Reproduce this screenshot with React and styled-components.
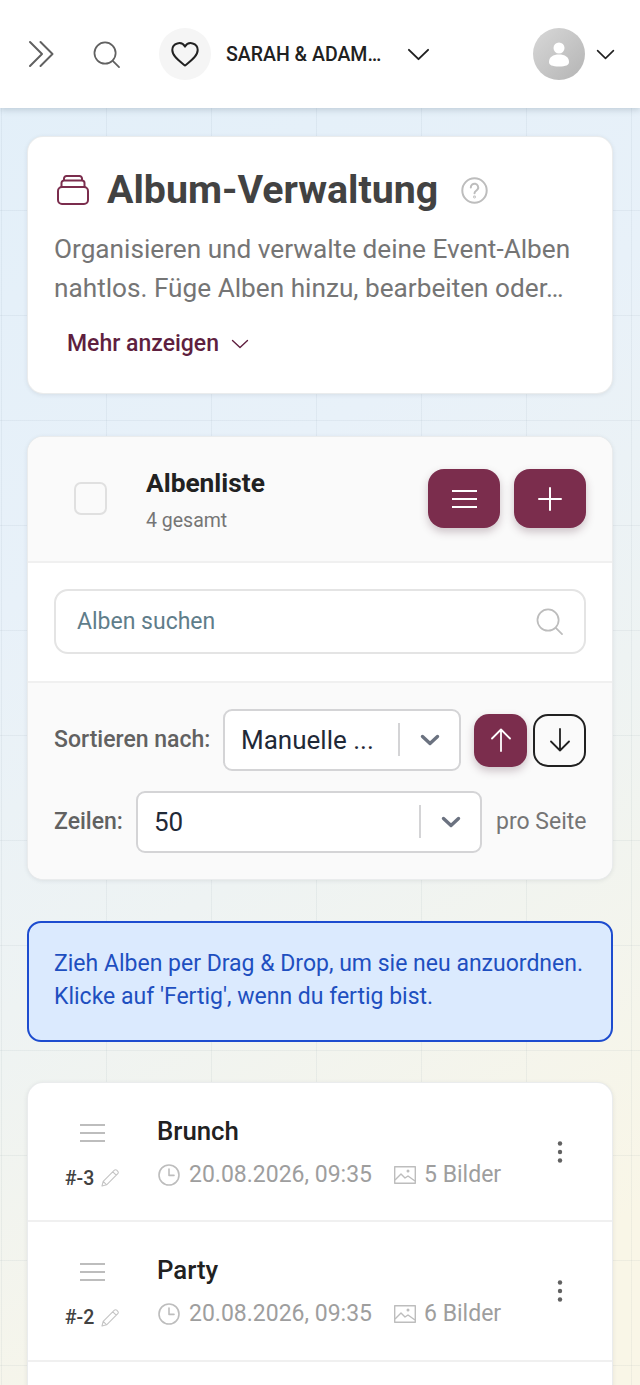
import React from 'react';
import styled, { createGlobalStyle } from 'styled-components';

const GlobalStyle = createGlobalStyle`
  html, body {
    margin: 0;
    padding: 0;
    height: 100%;
    overflow: hidden;
  }
  * {
    box-sizing: border-box;
  }
  body {
    font-family: Roboto, "Liberation Sans", sans-serif;
  }
`;

const Page = styled.div`
  height: 1385px;
  overflow: hidden;
  background-color: #eef3f5;
  background-image:
    linear-gradient(to right, rgba(120, 140, 150, 0.09) 1px, transparent 1px),
    linear-gradient(to bottom, rgba(120, 140, 150, 0.09) 1px, transparent 1px),
    linear-gradient(150deg, #e2eff9 0%, #e8f1f9 35%, #eef3f3 58%, #f9f6e7 90%);
  background-size: 105px 105px, 105px 105px, 100% 100%;
  background-position: 1px 0, 0 0, 0 0;
`;

const Header = styled.header`
  height: 108px;
  background: #fff;
  box-shadow: 0 2px 6px rgba(60, 80, 100, 0.22);
  display: flex;
  align-items: center;
  padding: 0 25px 0 28px;
`;

const IconButton = styled.span`
  display: flex;
  align-items: center;
  margin-left: ${(p) => p.$ml || 0}px;
`;

const HeartCircle = styled.div`
  width: 52px;
  height: 52px;
  margin-left: 39px;
  border-radius: 50%;
  background: #f5f5f5;
  display: flex;
  align-items: center;
  justify-content: center;
`;

const EventName = styled.div`
  width: 157px;
  margin-left: 15px;
  font-size: 19.5px;
  font-weight: 500;
  color: #212121;
  white-space: nowrap;
`;

const Avatar = styled.div`
  width: 52px;
  height: 52px;
  margin-left: auto;
  border-radius: 50%;
  background: linear-gradient(135deg, #d8d8d8, #b4b4b4);
  display: flex;
  align-items: center;
  justify-content: center;
`;

const Content = styled.main`
  padding: 28px 27px 0;
  display: flex;
  flex-direction: column;
  gap: 41.5px;
`;

const Card = styled.section`
  background: #fff;
  border-radius: 16px;
  border: 1px solid rgba(225, 228, 230, 0.7);
  box-shadow: 0 1px 4px rgba(60, 70, 80, 0.1);
  overflow: hidden;
`;

const IntroCard = styled(Card)`
  height: 258px;
  padding: 30px 26px 0;
`;

const AlbumList = styled(Card)`
  margin-top: -2px;
  height: 400px;
`;

const TitleRow = styled.div`
  display: flex;
  align-items: center;
  height: 46px;
`;

const AlbumIcon = styled.svg`
  margin-left: 3px;
  flex: none;
`;

const Title = styled.h1`
  margin: 0 0 0 18px;
  font-size: 39.3px;
  font-weight: 700;
  color: #424242;
  white-space: nowrap;
`;

const Description = styled.p`
  margin: 17px 0 0;
  font-size: 26.2px;
  line-height: 39px;
  color: #757575;
  white-space: nowrap;
`;

const MoreLink = styled.div`
  margin: 22px 0 0 13px;
  display: flex;
  align-items: center;
  gap: 12px;
  font-size: 23px;
  font-weight: 500;
  color: #5f1f3f;
`;

const ListHead = styled.div`
  height: 126px;
  padding: 0 26px 0 46px;
  background: #fafafa;
  border-bottom: 2px solid #f0f0f0;
  display: flex;
  align-items: center;
`;

const Checkbox = styled.div`
  width: 33px;
  height: 33px;
  border: 2px solid #e0e0e0;
  border-radius: 7px;
  background: #fafafa;
  flex: none;
`;

const HeadText = styled.div`
  margin-left: 39px;
  padding-top: 3px;
  display: flex;
  flex-direction: column;
  gap: 11px;
`;

const ListTitle = styled.div`
  font-size: 26.3px;
  font-weight: 700;
  color: #212121;
`;

const ListCount = styled.div`
  font-size: 19.5px;
  color: #757575;
`;

const HeadActions = styled.div`
  margin-left: auto;
  display: flex;
  gap: 14px;
`;

const PrimaryButton = styled.div`
  width: 72px;
  height: 59px;
  border-radius: 16px;
  background: #7b2d4d;
  box-shadow: 0 4px 8px rgba(70, 30, 50, 0.25);
  display: flex;
  align-items: center;
  justify-content: center;
`;

const SearchSection = styled.div`
  padding: 26px 26px 27px;
  background: #fff;
  border-bottom: 2px solid #f0f0f0;
`;

const SearchBox = styled.div`
  height: 65px;
  padding: 0 21px 0 21px;
  border: 2px solid #e4e4e4;
  border-radius: 14px;
  background: #fff;
  display: flex;
  align-items: center;
  justify-content: space-between;
  font-size: 23px;
  color: #5f7d8a;
`;

const SortSection = styled.div`
  height: 196px;
  padding: 26px 26px 0;
  background: #fafafa;
  display: flex;
  flex-direction: column;
  gap: 20px;
`;

const SortRow = styled.div`
  height: 62px;
  display: flex;
  align-items: center;
`;

const FieldLabel = styled.div`
  font-size: 23px;
  font-weight: 500;
  color: #616161;
  white-space: nowrap;
  flex: none;
  width: ${(p) => p.$width}px;
`;

const Select = styled.div`
  width: ${(p) => p.$width}px;
  height: 62px;
  flex: none;
  border: 2px solid #d4d4d6;
  border-radius: 9px;
  background: #fff;
  display: flex;
  align-items: center;
  padding-left: ${(p) => p.$pad}px;
  font-size: 26px;
  color: #1f2937;
`;

const SelectValue = styled.span`
  flex: 1;
  white-space: nowrap;
`;

const SelectDivider = styled.span`
  width: 2px;
  height: 33px;
  background: #d4d4d6;
  flex: none;
`;

const SelectArrow = styled.span`
  width: 59px;
  flex: none;
  display: flex;
  justify-content: center;
`;

const OrderButton = styled.div`
  width: 53px;
  height: 53px;
  flex: none;
  margin-left: ${(p) => p.$ml}px;
  margin-top: 1px;
  border-radius: 15px;
  display: flex;
  align-items: center;
  justify-content: center;
  background: ${(p) => (p.$active ? '#7b2d4d' : 'transparent')};
  border: ${(p) => (p.$active ? 'none' : '2px solid #212121')};
  box-shadow: ${(p) => (p.$active ? '0 4px 8px rgba(70, 30, 50, 0.25)' : 'none')};
`;

const PerPage = styled.div`
  margin-left: 14px;
  font-size: 23px;
  color: #757575;
  white-space: nowrap;
`;

const Notice = styled.div`
  height: 121px;
  padding: 24px 25px 0;
  background: #dbeafe;
  border: 2px solid #1d4ccf;
  border-radius: 14px;
  font-size: 23px;
  line-height: 33px;
  color: #1e4fc0;
  white-space: nowrap;
`;

const AlbumRow = styled.div`
  height: 139.5px;
  padding: 0 0 0 36px;
  border-bottom: 2px solid #f0f0f0;
  display: flex;
`;

const Handle = styled.div`
  width: 56px;
  flex: none;
  padding-top: 41px;
  display: flex;
  flex-direction: column;
  align-items: center;
`;

const OrderLabel = styled.div`
  margin-top: 25px;
  display: flex;
  align-items: center;
  gap: 7px;
  font-size: 19.5px;
  font-weight: 500;
  color: #424242;
`;

const AlbumBody = styled.div`
  margin-left: 37px;
  flex: 1;
  padding-top: 32px;
`;

const AlbumName = styled.div`
  font-size: 25.8px;
  font-weight: 500;
  line-height: 32px;
  color: #212121;
`;

const Meta = styled.div`
  margin-top: 12px;
  padding-left: 1px;
  display: flex;
  align-items: center;
  font-size: 23px;
  line-height: 32px;
  color: #9e9e9e;
`;

const MetaItem = styled.span`
  display: flex;
  align-items: center;
  gap: ${(p) => p.$gap}px;
  margin-left: ${(p) => p.$ml || 0}px;
  white-space: nowrap;
`;

const MoreDots = styled.div`
  width: 106px;
  flex: none;
  padding-top: 58px;
  padding-left: 50px;
`;

const Chevron = ({ size = 24, stroke = '#212121', width = 2, height }) => (
  <svg width={size} height={height || size * 0.6} viewBox="0 0 24 14" fill="none" stroke={stroke} strokeWidth={width} strokeLinecap="round" strokeLinejoin="round" preserveAspectRatio="none">
    <path d="M2 2l10 10L22 2" />
  </svg>
);

const SearchIcon = ({ stroke, size = 27 }) => (
  <svg width={size} height={size} viewBox="0 0 28 28" fill="none" stroke={stroke} strokeWidth="1.8" strokeLinecap="round">
    <circle cx="12.5" cy="12.5" r="11" />
    <path d="M20.5 20.5l6.5 6.5" />
  </svg>
);

const SelectChevron = () => (
  <svg width="20" height="12" viewBox="0 0 20 12" fill="none" stroke="#6b7280" strokeWidth="3.4" strokeLinecap="round" strokeLinejoin="round">
    <path d="M2.5 2.5L10 9.5l7.5-7" />
  </svg>
);

const MenuLines = ({ stroke }) => (
  <svg width="25" height="18" viewBox="0 0 25 18" fill="none" stroke={stroke} strokeWidth="2">
    <path d="M0 1h25M0 9h25M0 17h25" />
  </svg>
);

const Arrow = ({ stroke, up }) => (
  <svg width="20" height="24" viewBox="0 0 20 24" fill="none" stroke={stroke} strokeWidth="1.8" strokeLinecap="round" strokeLinejoin="round" style={{ transform: up ? 'none' : 'rotate(180deg)' }}>
    <path d="M10 23V1.5M1 10.5l9-9 9 9" />
  </svg>
);

const albums = [
  { name: 'Brunch', order: '#-3', images: '5 Bilder' },
  { name: 'Party', order: '#-2', images: '6 Bilder' },
];

const AlbumItem = ({ album }) => (
  <AlbumRow>
    <Handle>
      <MenuLines stroke="#bdbdbd" />
      <OrderLabel>
        {album.order}
        <svg width="18" height="18" viewBox="0 0 18 18" fill="none" stroke="#c4c4c4" strokeWidth="1.1" strokeLinejoin="round">
          <path d="M1 17l1.2-4.6L13.4 1.2a1.6 1.6 0 012.3 0l1.1 1.1a1.6 1.6 0 010 2.3L5.6 15.8 1 17zM2.2 12.4l3.4 3.4M11.8 2.8l3.4 3.4" />
        </svg>
      </OrderLabel>
    </Handle>
    <AlbumBody>
      <AlbumName>{album.name}</AlbumName>
      <Meta>
        <MetaItem $gap={9}>
          <svg width="22" height="22" viewBox="0 0 22 22" fill="none" stroke="#bdbdbd" strokeWidth="1.6" strokeLinecap="round" strokeLinejoin="round">
            <circle cx="11" cy="11" r="10" />
            <path d="M11 5v6.4h5" />
          </svg>
          20.08.2026, 09:35
        </MetaItem>
        <MetaItem $gap={8} $ml={22}>
          <svg width="22" height="18" viewBox="0 0 22 18" fill="none" stroke="#bdbdbd" strokeWidth="1.4" strokeLinejoin="round">
            <rect x="0.7" y="0.7" width="20.6" height="16.6" />
            <path d="M1 14l6-6 4 4 3-2 7 5" />
            <circle cx="14" cy="5" r="0.8" />
          </svg>
          {album.images}
        </MetaItem>
      </Meta>
    </AlbumBody>
    <MoreDots>
      <svg width="8" height="22" viewBox="0 0 8 22" fill="#616161">
        <circle cx="4" cy="2.5" r="2.2" />
        <circle cx="4" cy="11" r="2.2" />
        <circle cx="4" cy="19.5" r="2.2" />
      </svg>
    </MoreDots>
  </AlbumRow>
);

export default function App() {
  return (
    <>
      <GlobalStyle />
      <Page>
        <Header>
          <IconButton>
            <svg width="27" height="28" viewBox="0 0 27 28" fill="none" stroke="#616161" strokeWidth="2" strokeLinecap="round" strokeLinejoin="round">
              <path d="M2 2l12 12L2 26M12.5 2l12 12-12 12" />
            </svg>
          </IconButton>
          <IconButton $ml={38}>
            <SearchIcon stroke="#616161" />
          </IconButton>
          <HeartCircle>
            <svg width="28" height="25" viewBox="0 0 28 25" fill="none" stroke="#212121" strokeWidth="2" strokeLinejoin="round">
              <path d="M14 23.5C9 19.5 1.3 14.5 1.3 8A6.8 6.8 0 0114 4.6 6.8 6.8 0 0126.7 8C26.7 14.5 19 19.5 14 23.5z" />
            </svg>
          </HeartCircle>
          <EventName>SARAH &amp; ADAM…</EventName>
          <IconButton $ml={24}>
            <Chevron size={23} height={13} />
          </IconButton>
          <Avatar>
            <svg width="20" height="25" viewBox="0 0 20 25" fill="#fff">
              <circle cx="10" cy="6" r="5.5" />
              <path d="M0 20c0-5 4-7.5 10-7.5S20 15 20 20c0 3-3 4.5-10 4.5S0 23 0 20z" />
            </svg>
          </Avatar>
          <IconButton $ml={11}>
            <Chevron size={19} height={11} />
          </IconButton>
        </Header>

        <Content>
          <IntroCard>
            <TitleRow>
              <AlbumIcon width="32" height="30" viewBox="0 0 32 30" fill="none" stroke="#7b2d4d" strokeWidth="2" strokeLinejoin="round">
                <rect x="1" y="12" width="30" height="17" rx="4" />
                <path d="M4.5 12V8a2.5 2.5 0 012.5-2.5h18A2.5 2.5 0 0127.5 8v4M7 5.5V3.5A2.5 2.5 0 019.5 1h13A2.5 2.5 0 0125 3.5v2" />
              </AlbumIcon>
              <Title>Album-Verwaltung</Title>
              <IconButton $ml={23}>
                <svg width="27" height="27" viewBox="0 0 27 27" fill="none" stroke="#bdbdbd" strokeWidth="2" strokeLinecap="round">
                  <circle cx="13.5" cy="13.5" r="12.2" />
                  <path d="M9.8 10.5a3.7 3.7 0 117 1.6c-.8 1.4-3.3 2-3.3 4.2" />
                  <circle cx="13.5" cy="20" r="0.4" />
                </svg>
              </IconButton>
            </TitleRow>
            <Description>
              Organisieren und verwalte deine Event-Alben
              <br />
              nahtlos. Füge Alben hinzu, bearbeiten oder…
            </Description>
            <MoreLink>
              Mehr anzeigen
              <Chevron size={18} height={10} stroke="#5f1f3f" width={1.8} />
            </MoreLink>
          </IntroCard>

          <Card>
            <ListHead>
              <Checkbox />
              <HeadText>
                <ListTitle>Albenliste</ListTitle>
                <ListCount>4 gesamt</ListCount>
              </HeadText>
              <HeadActions>
                <PrimaryButton>
                  <MenuLines stroke="#fff" />
                </PrimaryButton>
                <PrimaryButton>
                  <svg width="24" height="24" viewBox="0 0 24 24" fill="none" stroke="#fff" strokeWidth="2" strokeLinecap="round">
                    <path d="M12 1v22M1 12h22" />
                  </svg>
                </PrimaryButton>
              </HeadActions>
            </ListHead>
            <SearchSection>
              <SearchBox>
                Alben suchen
                <SearchIcon stroke="#bdbdbd" />
              </SearchBox>
            </SearchSection>
            <SortSection>
              <SortRow>
                <FieldLabel $width={169}>Sortieren nach:</FieldLabel>
                <Select $width={238} $pad={16}>
                  <SelectValue>Manuelle ...</SelectValue>
                  <SelectDivider />
                  <SelectArrow>
                    <SelectChevron />
                  </SelectArrow>
                </Select>
                <OrderButton $active $ml={13}>
                  <Arrow stroke="#fff" up />
                </OrderButton>
                <OrderButton $ml={6}>
                  <Arrow stroke="#212121" />
                </OrderButton>
              </SortRow>
              <SortRow>
                <FieldLabel $width={82}>Zeilen:</FieldLabel>
                <Select $width={346} $pad={16}>
                  <SelectValue>50</SelectValue>
                  <SelectDivider />
                  <SelectArrow>
                    <SelectChevron />
                  </SelectArrow>
                </Select>
                <PerPage>pro Seite</PerPage>
              </SortRow>
            </SortSection>
          </Card>

          <Notice>
            Zieh Alben per Drag &amp; Drop, um sie neu anzuordnen.
            <br />
            Klicke auf 'Fertig', wenn du fertig bist.
          </Notice>

          <AlbumList>
            {albums.map((album) => (
              <AlbumItem key={album.name} album={album} />
            ))}
          </AlbumList>
        </Content>
      </Page>
    </>
  );
}
